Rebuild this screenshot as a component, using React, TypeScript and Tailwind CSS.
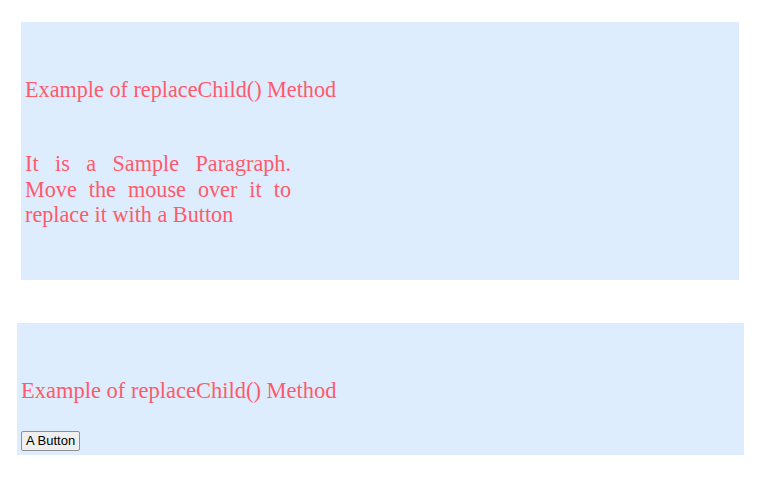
export default function App() {
  const serif = { fontFamily: '"Liberation Serif", "Times New Roman", serif' };
  return (
    <div className="min-h-[477px] w-[771px] bg-white">
      <div className="pt-[22px] pl-[21px] w-[739px]">
        <div className="bg-[#ddedfd] pt-[55px] pb-[52px] pl-[4px]" style={serif}>
          <h1 className="text-[22.2px] leading-[25px] text-[#ff5a6b] font-normal">
            Example of replaceChild() Method
          </h1>
          <p className="mt-[49px] w-[266px] text-justify text-[22.2px] leading-[25.5px] text-[#ff5a6b]">
            It is a Sample Paragraph. Move the mouse over it to replace it with a Button
          </p>
        </div>
      </div>
      <div className="mt-[43px] ml-[17px] w-[727px] bg-[#ddedfd] pt-[55px] pb-[4px] pl-[4px]">
        <h1
          className="text-[22.5px] leading-[25px] text-[#ff5a6b] font-normal"
          style={serif}
        >
          Example of replaceChild() Method
        </h1>
        <button
          className="mt-[28px] h-[20px] px-[4px] text-[13px] leading-none text-black bg-[#efefef] border border-[#8f8f8f] rounded-[2px]"
          style={{ fontFamily: '"Liberation Sans", Arial, sans-serif' }}
        >
          A Button
        </button>
      </div>
    </div>
  );
}
